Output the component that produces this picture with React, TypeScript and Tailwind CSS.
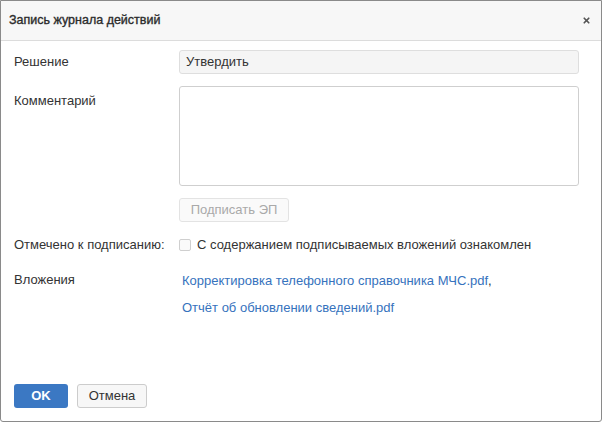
import { X } from "lucide-react";

const font = { fontFamily: '"Liberation Sans", Arial, sans-serif' };

const attachments = [
  "Корректировка телефонного справочника МЧС.pdf",
  "Отчёт об обновлении сведений.pdf",
];

export default function App() {
  return (
    <div
      className="w-[602px] h-[422px] flex flex-col bg-white border border-[#8a8a8a] rounded-b-[3px] text-[13px] text-[#333] overflow-hidden"
      style={font}
    >
      {/* Header */}
      <div className="h-[40px] shrink-0 flex items-center justify-between pl-[8px] pr-[10px] bg-[#f7f7f7] border-b border-[#dcdcdc]">
        <span className="text-[12.5px] text-[#2b2b2b] [-webkit-text-stroke:0.35px_#2b2b2b]">Запись журнала действий</span>
        <X className="w-[9px] h-[9px] text-[#555]" strokeWidth={4.5} />
      </div>

      {/* Body */}
      <div className="flex-1 pt-[9px] pl-[13px] pr-[22px] grid grid-cols-[165px_1fr] content-start">
        <div className="h-[24px] flex items-center">Решение</div>
        <div className="h-[24px] flex items-center px-[6px] bg-[#f5f5f5] border border-[#dedede] rounded-[3px]">
          Утвердить
        </div>

        <div className="mt-[12px] pt-[5px]">Комментарий</div>
        <div className="mt-[12px] h-[100px] border border-[#cfcfcf] rounded-[3px] bg-white" />

        <div className="mt-[12px]" />
        <div className="mt-[12px]">
          <button
            disabled
            className="h-[24px] w-[110px] border border-[#e3e3e3] rounded-[3px] bg-[#fafafa] text-[#a9a9a9] text-[13px]"
          >
            Подписать ЭП
          </button>
        </div>

        <div className="mt-[13px] h-[20px] flex items-center">Отмечено к подписанию:</div>
        <div className="mt-[13px] h-[20px] flex items-center gap-[6px]">
          <span className="w-[12px] h-[12px] border border-[#cfcfcf] rounded-[2px] bg-[#fafafa]" />
          <span>С содержанием подписываемых вложений ознакомлен</span>
        </div>

        <div className="mt-[15px] h-[20px] flex items-center">Вложения</div>
        <div className="mt-[16px] pl-[3px] flex flex-col gap-[7px]">
          {attachments.map((name, i) => (
            <div key={name} className="h-[20px] flex items-center">
              <a className="text-[#3672bd]">{name}</a>
              {i < attachments.length - 1 && <span>,</span>}
            </div>
          ))}
        </div>
      </div>

      {/* Footer */}
      <div className="shrink-0 flex gap-[9px] pl-[13px] pb-[13px]">
        <button className="h-[24px] w-[54px] rounded-[3px] bg-[#3b78c3] text-white font-bold text-[13px]">
          OK
        </button>
        <button className="h-[24px] w-[70px] rounded-[3px] bg-[#f7f7f7] border border-[#cccccc] text-[#333] text-[13px]">
          Отмена
        </button>
      </div>
    </div>
  );
}
